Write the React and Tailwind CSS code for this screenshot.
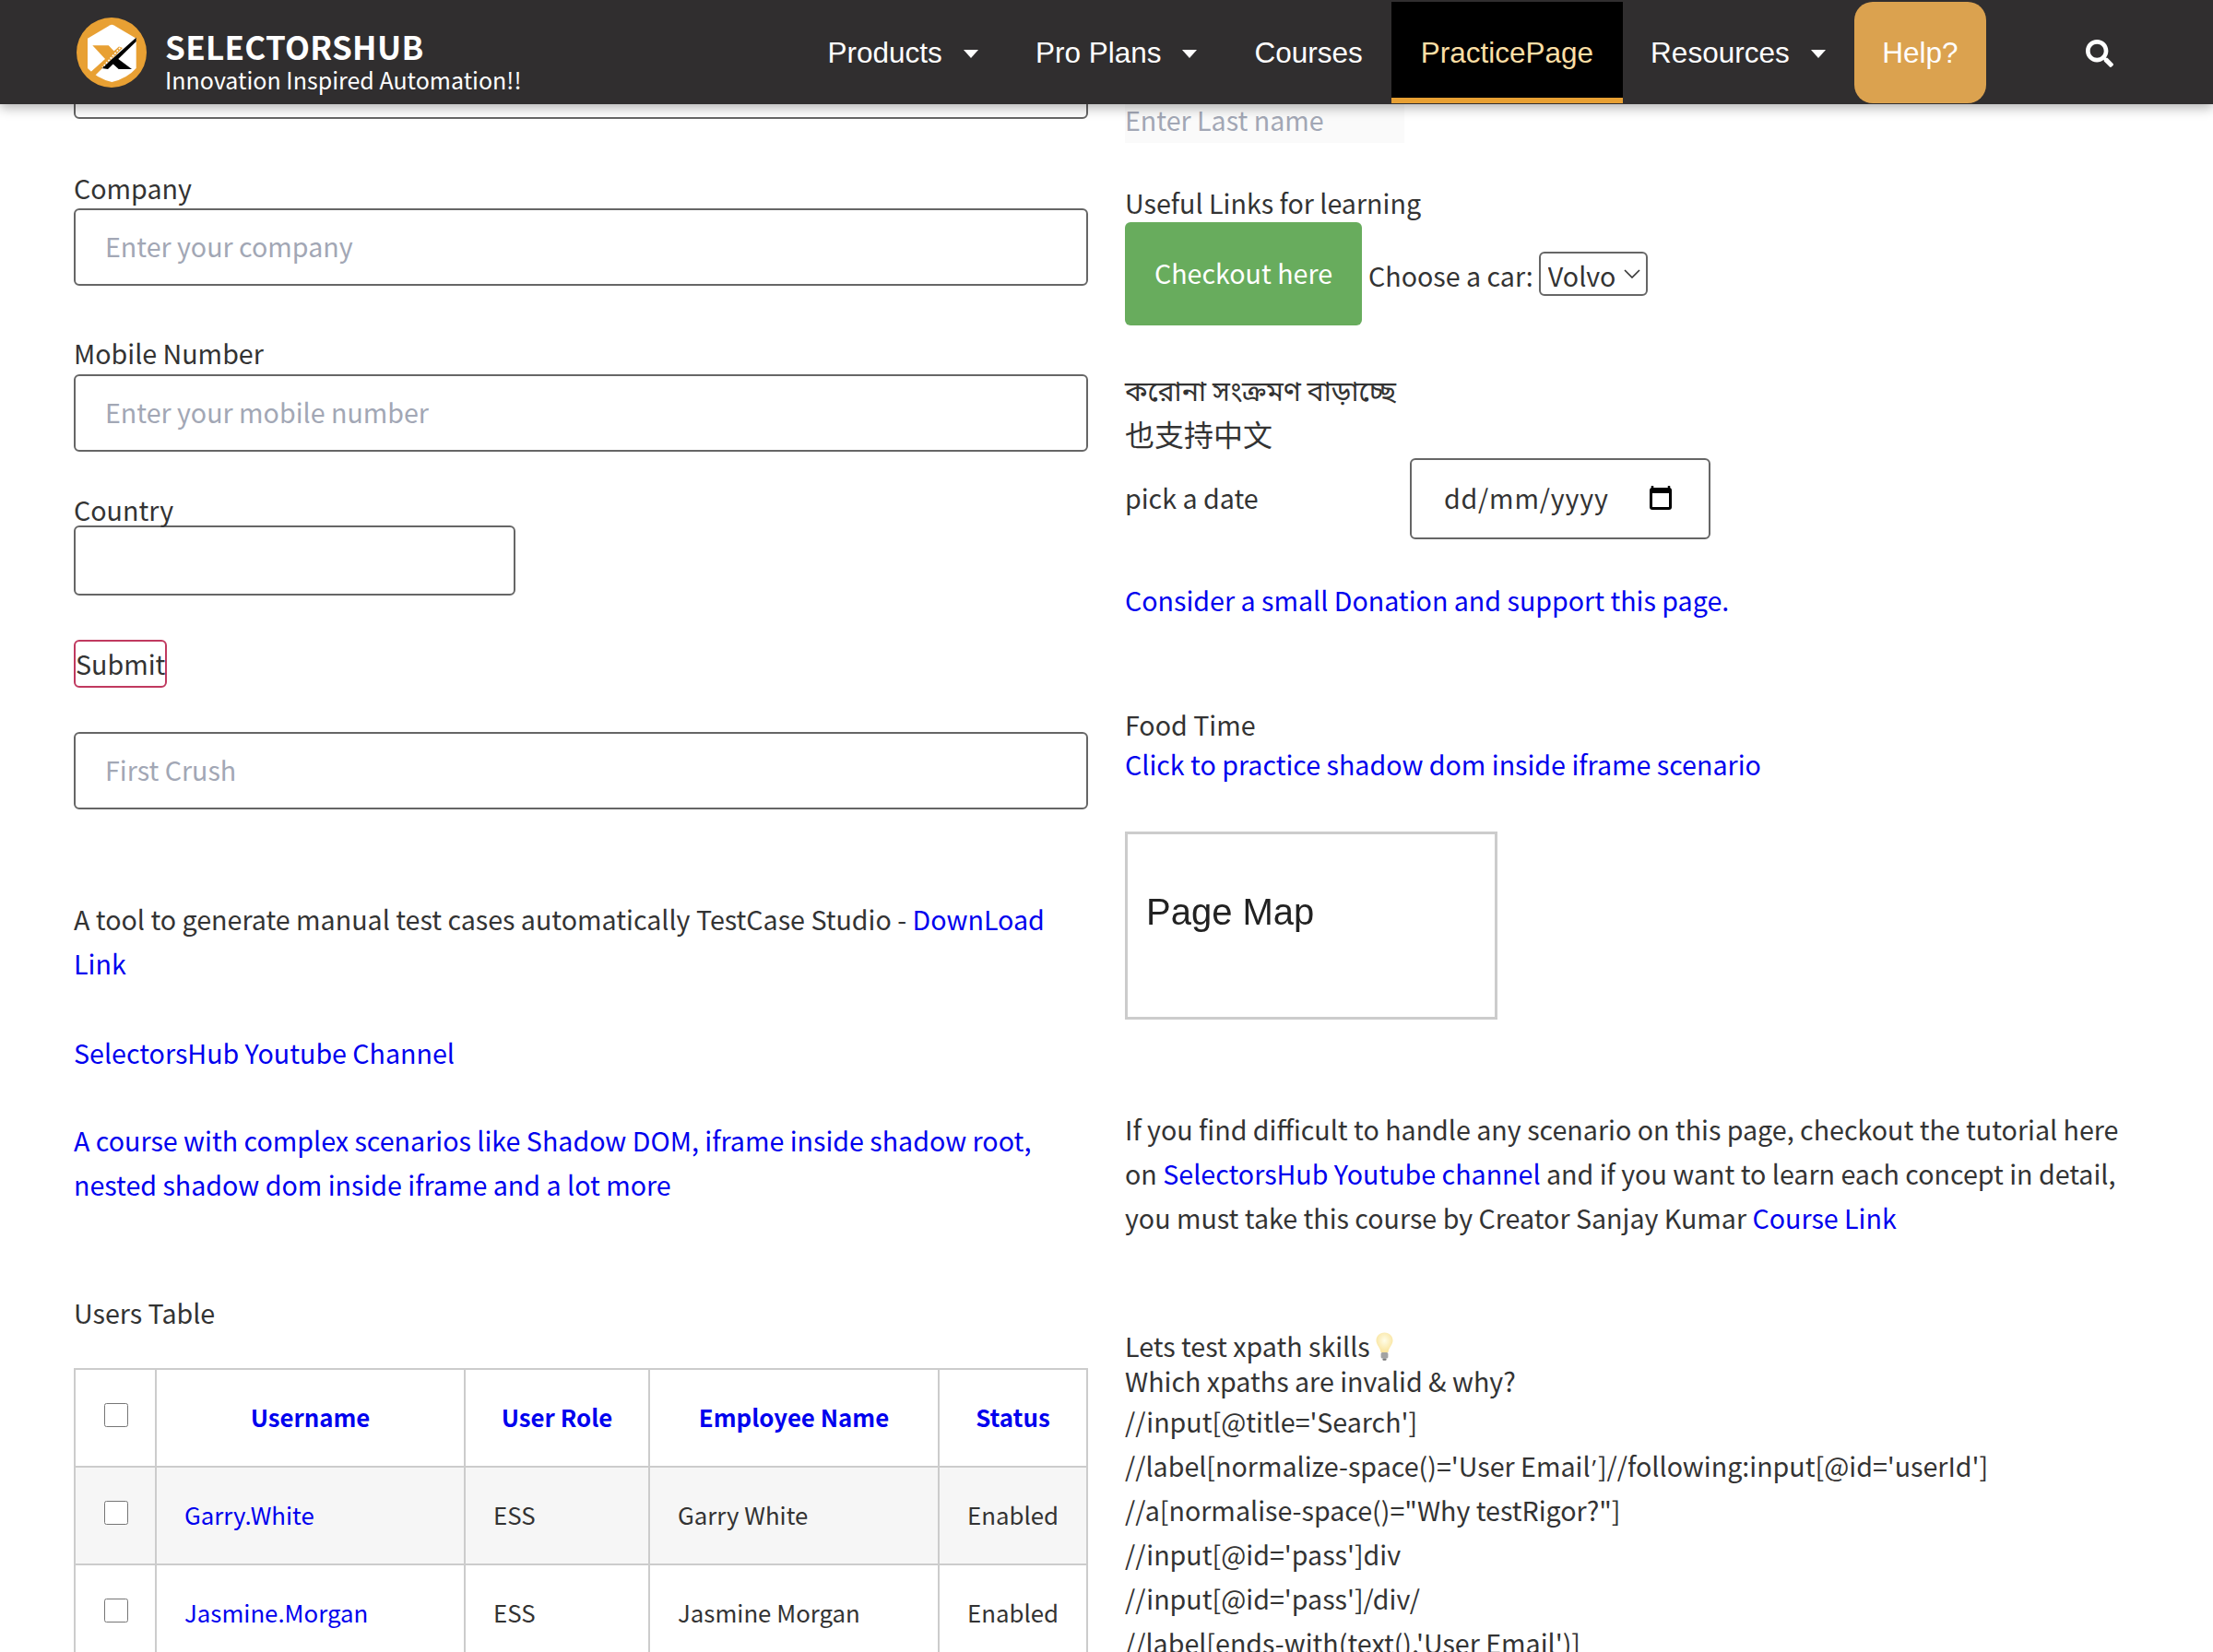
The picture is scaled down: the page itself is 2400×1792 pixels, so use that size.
import React from "react";
import { FaSearch } from "react-icons/fa";

const FONT = "[font-family:'Noto_Sans_CJK_SC','Noto_Sans_Bengali','Noto_Sans',sans-serif]";

function Logo() {
  return (
    <svg width="76" height="76" viewBox="0 0 76 76" className="shrink-0">
      <circle cx="38" cy="38" r="38" fill="#e8a033" />
      <path d="M12 22.7 L36 8.5 Q38.3 7.2 40.6 8.5 L64.7 22.7 V55 Q55 66 38.3 70 Q22 66 12 55 Z" fill="#ffffff" />
      <polygon points="17.3,30.3 34.7,30.3 44,40 32,46" fill="#e8a033" />
      <polygon points="46,31.5 50,33 16,67 11,63" fill="#e8a033" />
      <polygon points="64.7,21.7 64.7,26 34,56 27.3,55" fill="#000000" />
      <polygon points="42.3,42.7 60,56 45.7,56 36.7,47.7" fill="#000000" />
      <line x1="47.3" y1="32.7" x2="28" y2="54.3" stroke="#ffffff" strokeWidth="1.6" strokeDasharray="2 1.5" />
    </svg>
  );
}

function Caret() {
  return <span className="ml-[23px] inline-block w-0 h-0 border-l-[8px] border-r-[8px] border-t-[9px] border-l-transparent border-r-transparent border-t-white mt-[3px]" />;
}

function NavItem({ label, caret, pad = "px-[31px]" }) {
  return (
    <a className={`flex items-center h-full ${pad} text-white pb-[1px]`}>
      {label}
      {caret && <Caret />}
    </a>
  );
}

function Header() {
  return (
    <header className="relative z-10 h-[113px] bg-[#302e2f] shadow-[0_4px_12px_rgba(0,0,0,0.3)] flex items-stretch pl-[83px]">
      <div className="flex items-center gap-[20px]">
        <Logo />
        <div className="text-white pt-[20px]">
          <div className={`${FONT} font-bold text-[35px] leading-[39px] tracking-[0.3px]`}>SELECTORSHUB</div>
          <div className={`${FONT} text-[25px] leading-[34px]`}>Innovation Inspired Automation!!</div>
        </div>
      </div>
      <nav className="ml-auto mr-[246px] flex items-stretch pt-[2px] pb-[1px] text-[31.5px] [font-family:'Liberation_Sans',sans-serif]">
        <NavItem label="Products" caret />
        <NavItem label="Pro Plans" caret />
        <NavItem label="Courses" />
        <a className="flex items-center px-[32px] bg-black text-[#fbdfa5] border-b-[6px] border-[#e8a033] pt-[5px]">PracticePage</a>
        <NavItem label="Resources" caret pad="pl-[30px] pr-[31px]" />
        <a className="flex items-center px-[30.5px] bg-[#dba24f] text-white rounded-[20px] pb-[1px]">Help?</a>
      </nav>
      <div className="absolute left-[2262px] top-[43px] text-white text-[30px]"><FaSearch /></div>
    </header>
  );
}

const INPUT = "block w-full h-[84px] border-2 border-[#666666] rounded-[6px] bg-white px-[32px] pb-[3px] text-[28.64px] text-[#333333] placeholder:text-[#a2a7b5] outline-none";
const A = "text-[#0000ee]";

function Left() {
  return (
    <div className="w-[1100px] shrink-0">
      <input className={INPUT} />
      <div className="mt-[51px] h-[48px]">Company</div>
      <input className={`${INPUT} -mt-[2px]`} placeholder="Enter your company" />
      <div className="mt-[49px] h-[48px]">Mobile Number</div>
      <input className={`${INPUT} -mt-[1px]`} placeholder="Enter your mobile number" />
      <div className="mt-[39px] h-[48px]">Country</div>
      <input className="block w-[479px] h-[76px] -mt-[7px] border-2 border-[#666666] rounded-[6px] bg-white" />
      <button className="block mt-[48px] w-[101px] h-[52px] pb-[6px] border-2 border-[#c0395f] rounded-[6px] text-left text-[#333333]">Submit</button>
      <input className={`${INPUT} mt-[48px]`} placeholder="First Crush" />
      <p className="mt-[95px]">A tool to generate manual test cases automatically TestCase Studio - <a className={A}>DownLoad Link</a></p>
      <p className="mt-[49px]"><a className={A}>SelectorsHub Youtube Channel</a></p>
      <p className="mt-[47px]"><a className={A}>A course with complex scenarios like Shadow DOM, iframe inside shadow root, nested shadow dom inside iframe and a lot more</a></p>
      <p className="mt-[91px]">Users Table</p>
      <Table />
    </div>
  );
}

const TD = "border-2 border-[#cccccc] px-[30px] pb-[3px] h-[106px] text-[25.8px] align-middle";
const TH = "border-2 border-[#cccccc] pb-[2px] h-[106px] text-[25.8px] font-bold text-center text-[#0000ee] align-middle";

function Box() {
  return <input type="checkbox" className="block w-[26px] h-[26px] ml-[31px] -mt-[6px]" />;
}

function Table() {
  const rows = [
    ["Garry.White", "ESS", "Garry White", "Enabled", "bg-[#f6f6f6]"],
    ["Jasmine.Morgan", "ESS", "Jasmine Morgan", "Enabled", "bg-white"],
  ];
  return (
    <table className="mt-[36px] w-[1098px] table-fixed border-collapse">
      <colgroup>
        <col className="w-[88px]" />
        <col className="w-[335px]" />
        <col className="w-[200px]" />
        <col className="w-[314px]" />
        <col className="w-[161px]" />
      </colgroup>
      <thead>
        <tr>
          <th className="border-2 border-[#cccccc] h-[106px] align-middle"><Box /></th>
          <th className={TH}>Username</th>
          <th className={TH}>User Role</th>
          <th className={TH}>Employee Name</th>
          <th className={TH}>Status</th>
        </tr>
      </thead>
      <tbody>
        {rows.map((r) => (
          <tr key={r[0]} className={r[4]}>
            <td className="border-2 border-[#cccccc] h-[106px] align-middle"><Box /></td>
            <td className={`${TD} text-[#0000ee]`}>{r[0]}</td>
            <td className={TD}>{r[1]}</td>
            <td className={TD}>{r[2]}</td>
            <td className={TD}>{r[3]}</td>
          </tr>
        ))}
      </tbody>
    </table>
  );
}

function Bulb() {
  return (
    <svg width="19" height="31" viewBox="0 0 19 31" className="inline-block align-top ml-[6px] mt-[4px]">
      <defs>
        <radialGradient id="bulb" cx="50%" cy="40%" r="60%">
          <stop offset="0%" stopColor="#fffde8" />
          <stop offset="100%" stopColor="#f9e39a" />
        </radialGradient>
      </defs>
      <path d="M9.5 0.5 C4.2 0.5 0.5 4.3 0.5 9 C0.5 14 4.8 16.5 5.6 22 H13.4 C14.2 16.5 18.5 14 18.5 9 C18.5 4.3 14.8 0.5 9.5 0.5 Z" fill="url(#bulb)" />
      <rect x="5.6" y="22" width="7.8" height="6.5" rx="1.5" fill="#a3a3a3" />
      <rect x="7.4" y="28.5" width="4.2" height="2.2" rx="1" fill="#777777" />
    </svg>
  );
}

function Right() {
  return (
    <div className="w-[1100px] shrink-0">
      <input className="block mt-[62px] w-[303px] h-[48px] pb-[2px] bg-[#fafafa] text-[28.64px] outline-none placeholder:text-[#a2a7b5]" placeholder="Enter Last name" />
      <div className="mt-[41px] h-[48px]">Useful Links for learning</div>
      <div className="-mt-[3px] h-[112px] flex items-center">
        <a className="w-[257px] h-[112px] pb-[2px] flex items-center justify-center rounded-[6px] bg-[#68ac5d] text-white">Checkout here</a>
        <span className="ml-[7px] pt-[4px]">Choose a car:</span>
        <div className="relative ml-[6px]">
          <select className="block appearance-none w-[118px] h-[48px] pb-[5px] border-2 border-[#666666] rounded-[6px] bg-white pl-[8px] text-[#333333]">
            <option>Volvo</option>
          </select>
          <svg width="18" height="10" viewBox="0 0 18 10" className="absolute right-[8px] top-[19px]" fill="none" stroke="#333333" strokeWidth="1.6">
            <path d="M1 1 L9 9 L17 1" />
          </svg>
        </div>
      </div>
      <div className="mt-[45px] text-[30.4px]">করোনা সংক্রমণ বাড়াচ্ছে</div>
      <div className="text-[32px]">也支持中文</div>
      <div className="mt-[3px] h-[88px] flex items-center">
        <span className="w-[309px] pb-[2px]">pick a date</span>
        <div className="w-[326px] h-[88px] border-2 border-[#666666] rounded-[6px] flex items-center pl-[35px] pr-[38px] tracking-[0.8px]">
          <span className="pb-[2px]">dd/mm/yyyy</span>
          <svg width="28" height="28" viewBox="0 0 28 28" className="ml-auto -mt-[2px]">
            <path d="M5 1 V4 M23 1 V4" stroke="#000" strokeWidth="2.5" />
            <rect x="2" y="3" width="24" height="24" rx="3" fill="#000" />
            <rect x="5" y="9" width="18" height="15" fill="#fff" />
          </svg>
        </div>
      </div>
      <p className="mt-[42px]"><a className={A}>Consider a small Donation and support this page.</a></p>
      <p className="mt-[87px]">Food Time</p>
      <p className="-mt-[5px]"><a className={A}>Click to practice shadow dom inside iframe scenario</a></p>
      <div className="mt-[49px] w-[404px] h-[204px] border-[3px] border-[#cccccc] pl-[20px] pt-[59px] text-[40px] leading-[50px] text-[#222222] blur-[0.5px] [font-family:'Liberation_Sans',sans-serif]">Page Map</div>
      <p className="mt-[95px]">If you find difficult to handle any scenario on this page, checkout the tutorial here on <a className={A}>SelectorsHub Youtube channel</a> and if you want to learn each concept in detail, you must take this course by Creator Sanjay Kumar <a className={A}>Course Link</a></p>
      <div className="mt-[96px] h-[38px] leading-[38px]">Lets test xpath skills<Bulb /></div>
      <div className="h-[38px] leading-[38px]">Which xpaths are invalid &amp; why?</div>
      <div className="mt-[1px]">//input[@title='Search']</div>
      <div>//label[normalize-space()='User Email<span className="mx-[2px] leading-none [font-family:'Open_Sans',sans-serif] text-[26px]">’</span>]//following:input[@id='userId']</div>
      <div>//a[normalise-space()="Why testRigor?"]</div>
      <div>//input[@id='pass']div</div>
      <div>//input[@id='pass']/div/</div>
      <div>//label[ends-with(text(),'User Email')]</div>
    </div>
  );
}

export default function App() {
  return (
    <div className={`relative h-[1792px] overflow-hidden bg-white text-[28.64px] leading-[48px] text-[#333333] ${FONT}`}>
      <Header />
      <main className="-mt-[68px] pl-[80px] flex gap-[40px]">
        <Left />
        <Right />
      </main>
    </div>
  );
}
